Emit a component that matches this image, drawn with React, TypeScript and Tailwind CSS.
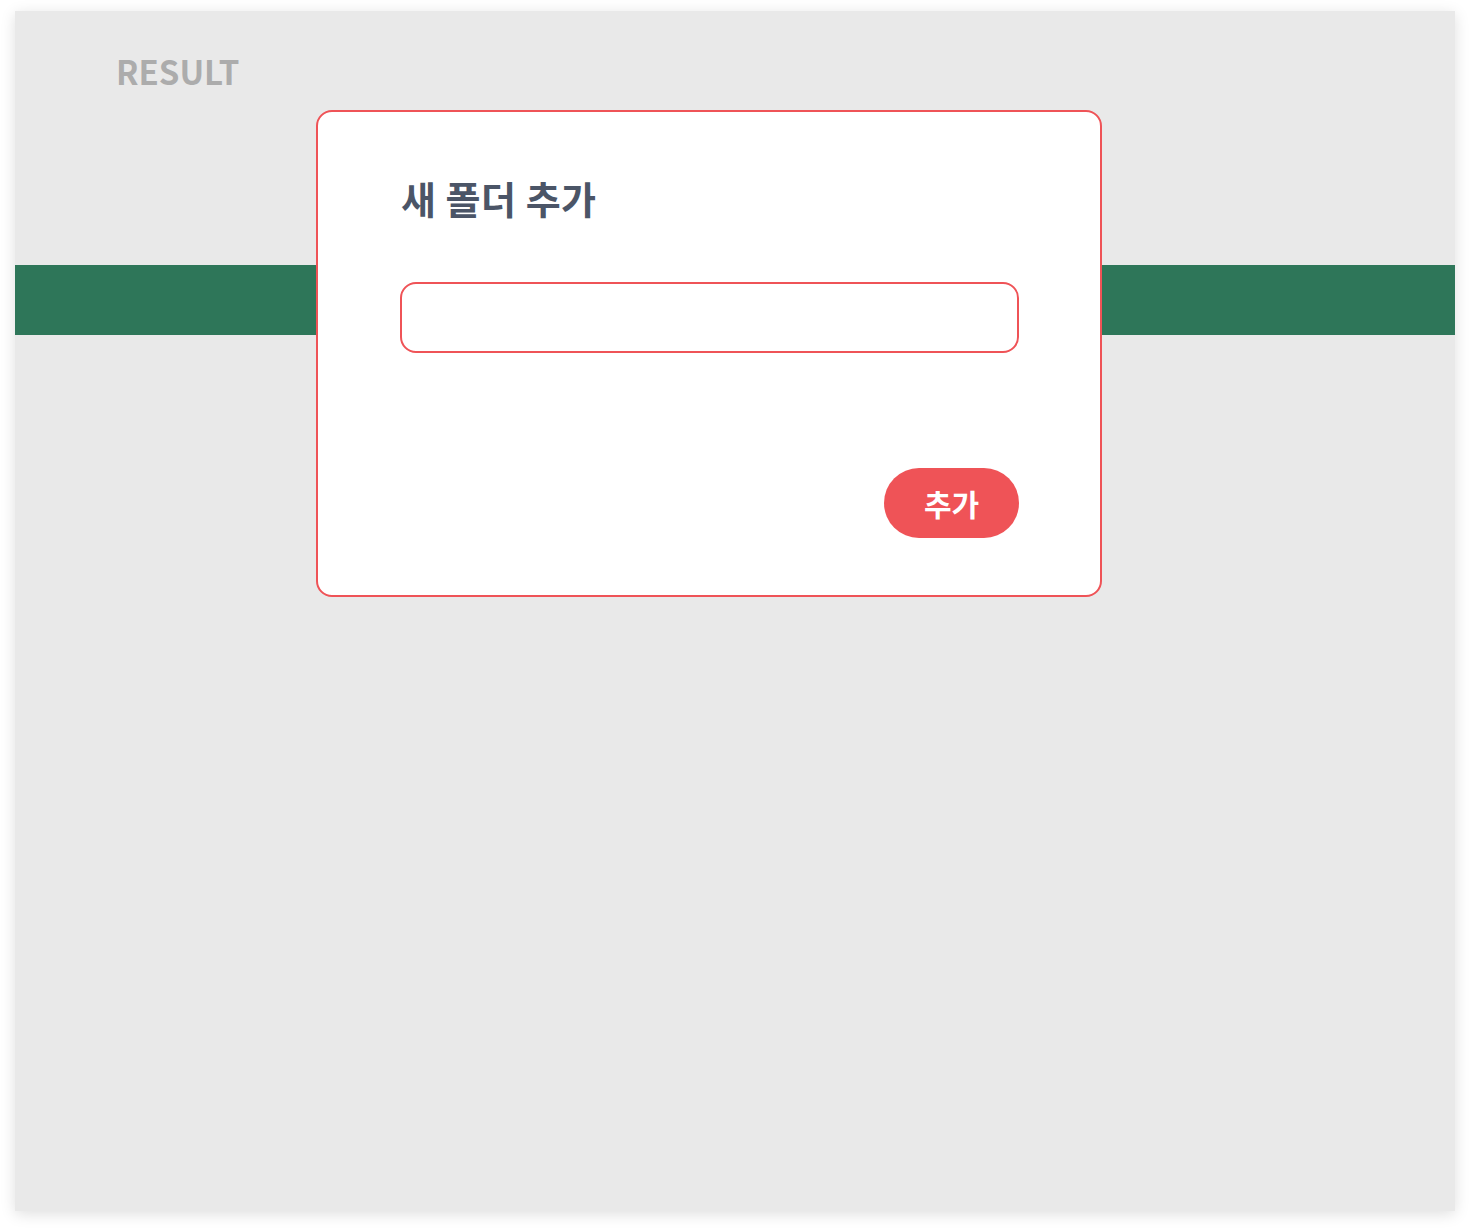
import React from "react";

export default function App() {
  return (
    <div className="min-h-screen bg-white pt-[11px] px-[15px] font-['Noto_Sans_CJK_KR','Noto_Sans',sans-serif]">
      <div className="relative h-[1200px] w-[1440px] bg-[#e9e9e9] shadow-[0_3px_14px_rgba(0,0,0,0.13)]">
        <div className="pl-[101px] pt-[37px]">
          <h1 className="text-[33px] font-bold leading-[47px] text-[#acacac]">RESULT</h1>
        </div>
        <div className="mt-[170px] h-[70px] bg-[#2e7659]" />

        <div className="absolute left-[301px] top-[99px] w-[786px] rounded-[16px] border-2 border-[#ef5357] bg-white pl-[83px] pr-[81px] pt-[63px] pb-[57px]">
          <h2 className="text-[38px] font-bold leading-[46px] tracking-[0.5px] text-[#4b5567]">새 폴더 추가</h2>
          <input
            type="text"
            className="-ml-[1px] mt-[61px] block h-[71px] w-[calc(100%+1px)] rounded-[16px] border-2 border-[#ef5357] bg-white px-5 text-[20px] outline-none"
          />
          <div className="mt-[115px] flex justify-end">
            <button className="h-[70px] w-[135px] rounded-full bg-[#ef5357] text-[30px] font-bold text-white">
              추가
            </button>
          </div>
        </div>
      </div>
    </div>
  );
}
